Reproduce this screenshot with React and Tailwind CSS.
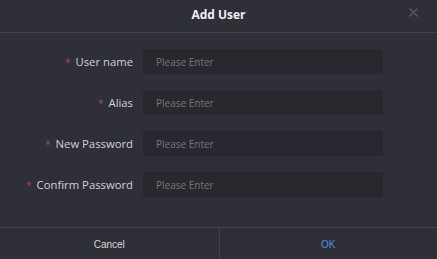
export default function App() {
  const rows = ["User name", "Alias", "New Password", "Confirm Password"];
  return (
    <div className="w-[437px] h-[259px] bg-[#2f2f37] flex flex-col overflow-hidden" style={{ fontFamily: '"Open Sans", "Noto Sans", sans-serif' }}>
      <div className="relative h-[33px] border-b border-[#424249] flex items-center justify-center">
        <span className="text-[12px] font-bold text-[#f0f0f0] leading-none -mt-[2px]">Add User</span>
        <svg className="absolute right-[19px] top-[8px]" width="9" height="9" viewBox="0 0 9 9">
          <path d="M0.5 0.5 L8.5 8.5 M8.5 0.5 L0.5 8.5" stroke="#5a5a62" strokeWidth="1.3" />
        </svg>
      </div>
      <div className="flex-1 flex flex-col gap-[16px] pt-[16px]">
        {rows.map((r) => (
          <div key={r} className="flex items-center h-[25px]">
            <div className="w-[133px] text-right text-[11.3px] text-[#d2d2d6] leading-none">
              <span className="text-[#a3475f] text-[10px] mr-[5px]">*</span>
              {r}
            </div>
            <div className="ml-[10px] w-[240px] h-[25px] bg-[#28282e] flex items-center pl-[13px]">
              <span className="text-[10px] text-[#77777d] leading-none">Please Enter</span>
            </div>
          </div>
        ))}
      </div>
      <div className="h-[32px] border-t border-[#45454d] grid grid-cols-2" style={{ fontFamily: '"Liberation Sans", Arial, sans-serif' }}>
        <div className="flex items-center justify-center text-[10px] text-[#d8d8dc] pt-[1px]">Cancel</div>
        <div className="flex items-center justify-center text-[10px] text-[#4b8fe0] border-l border-[#45454d] pt-[1px]">OK</div>
      </div>
    </div>
  );
}
